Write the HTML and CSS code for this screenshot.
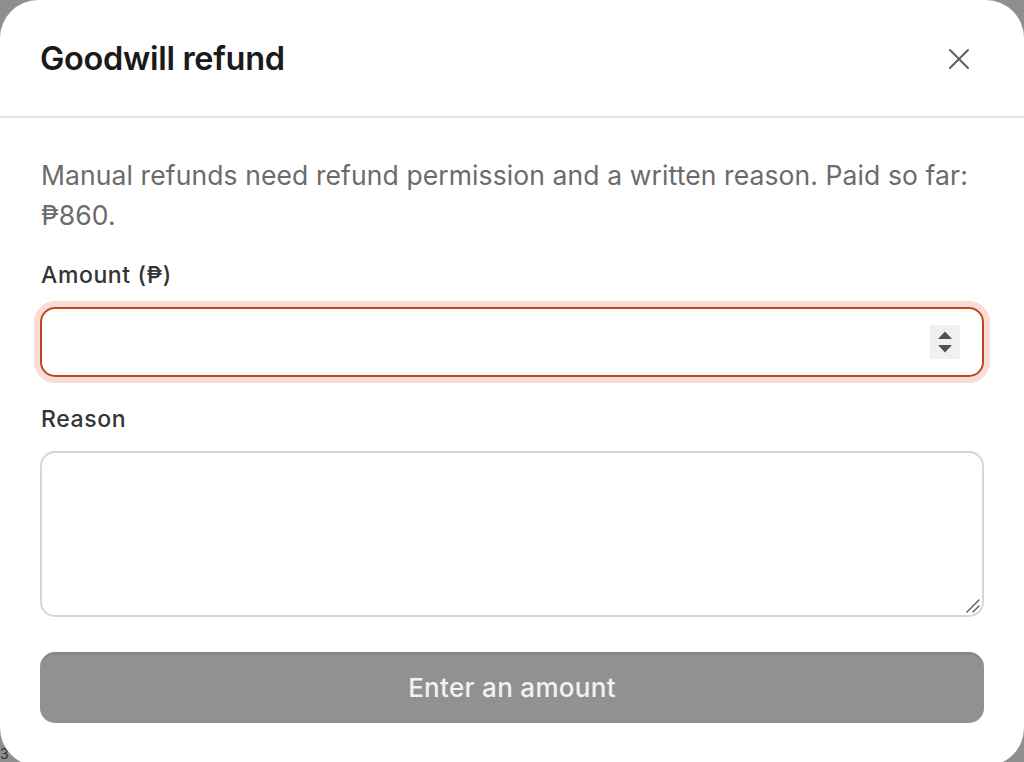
FILE: index.html
```html
<!DOCTYPE html>
<html lang="en">
<head>
<meta charset="utf-8">
<title>Goodwill refund</title>
<link rel="stylesheet" href="styles.css">
</head>
<body>
<div class="backdrop-note">3</div>
<div class="modal">
  <header class="modal-header">
    <h1 class="modal-title">Goodwill refund</h1>
    <button class="close-btn" aria-label="Close">
      <svg width="22" height="22" viewBox="0 0 22 22" fill="none" stroke="#5f6061" stroke-width="2" stroke-linecap="round"><path d="M2 2 L20 20 M20 2 L2 20"/></svg>
    </button>
  </header>
  <div class="modal-body">
    <p class="intro">Manual refunds need refund permission and a written reason. Paid so far: ₱860.</p>
    <label class="field-label" for="amount">Amount (₱)</label>
    <div class="amount-input">
      <input id="amount" type="text" class="amount-field">
      <span class="spinner">
        <svg width="30" height="34" viewBox="0 0 30 34"><path d="M8 14 L15 6.5 L22 14 Z M8 20 L22 20 L15 27.5 Z" fill="#505152"/></svg>
      </span>
    </div>
    <label class="field-label reason-label" for="reason">Reason</label>
    <div class="textarea-wrap">
      <textarea id="reason" class="reason-field"></textarea>
      <svg class="grip" width="16" height="16" viewBox="0 0 16 16" stroke="#555" stroke-width="1.4" stroke-linecap="round"><path d="M2 14 L14 2 M8 14 L14 8"/></svg>
    </div>
    <button class="submit-btn" disabled>Enter an amount</button>
  </div>
</div>
</body>
</html>
```
FILE: styles.css
```css
html, body {
  margin: 0;
  padding: 0;
  height: 100%;
  overflow: hidden;
}
body {
  background: #8e8f90;
  font-family: Inter, "Noto Sans", "Liberation Sans", sans-serif;
  position: relative;
}
.backdrop-note {
  position: absolute;
  left: 0;
  top: 746px;
  font-size: 14px;
  line-height: 16px;
  color: #333;
}
.modal {
  position: relative;
  background: #fff;
  width: 1024px;
  height: 766px;
  border-radius: 38px;
  overflow: hidden;
}
.modal-header {
  height: 116px;
  border-bottom: 2px solid #e4e4e4;
  display: flex;
  align-items: center;
  justify-content: space-between;
  padding: 0 41px 0 40px;
}
.modal-title {
  margin: 0;
  font-size: 32.5px;
  font-weight: 600;
  letter-spacing: -0.3px;
  color: #1a1a1a;
  padding-top: 0;
}
.close-btn {
  background: none;
  border: 0;
  padding: 0;
  margin-right: 13px;
  margin-top: 2px;
  width: 22px;
  height: 22px;
  display: flex;
  cursor: pointer;
}
.modal-body {
  padding: 37px 40px 0 40px;
  display: flex;
  flex-direction: column;
}
.intro {
  margin: 0 0 0 1px;
  font-size: 26.5px;
  line-height: 40px;
  color: #6a6b6d;
  letter-spacing: 0.1px;
}
.field-label {
  display: block;
  margin: 24px 0 0 1px;
  font-size: 23px;
  line-height: 32px;
  font-weight: 450;
  letter-spacing: 0.6px;
  color: #333435;
}
.amount-input {
  position: relative;
  margin-top: 16px;
  height: 70px;
  border: 2px solid #c2431c;
  border-radius: 15px;
  box-shadow: 0 0 0 6px #f7ddd5;
  box-sizing: border-box;
}
.amount-field {
  width: 100%;
  height: 100%;
  border: 0;
  outline: none;
  background: transparent;
  font: inherit;
  font-size: 24px;
  padding: 0 20px;
  box-sizing: border-box;
}
.spinner {
  position: absolute;
  right: 22px;
  top: 16px;
  width: 30px;
  height: 34px;
  background: #f0f0f0;
  display: flex;
}
.reason-label {
  margin-top: 26px;
}
.textarea-wrap {
  position: relative;
  margin-top: 16px;
  height: 166px;
}
.reason-field {
  width: 100%;
  height: 100%;
  border: 2px solid #d6d6d6;
  border-radius: 15px;
  box-sizing: border-box;
  resize: none;
  font: inherit;
  outline: none;
}
.grip {
  position: absolute;
  right: 3px;
  bottom: 3px;
}
.submit-btn {
  margin-top: 35px;
  height: 71px;
  border: 0;
  border-top: 3px solid #858687;
  border-radius: 15px;
  background: #909192;
  color: #f2f2f2;
  font-family: inherit;
  font-size: 26px;
  font-weight: 450;
  letter-spacing: 0.3px;
  padding-bottom: 4px;
}
```
